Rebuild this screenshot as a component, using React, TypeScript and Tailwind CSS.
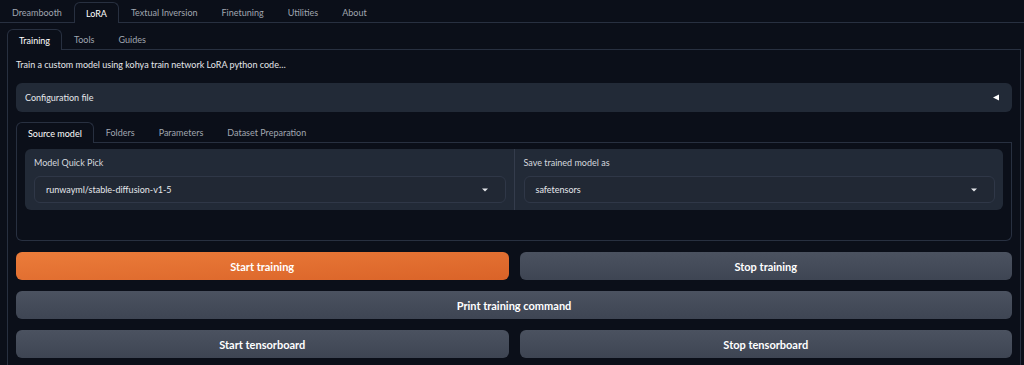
import { useState } from "react"

const topTabs = ["Dreambooth", "LoRA", "Textual Inversion", "Finetuning", "Utilities", "About"]
const subTabs = ["Training", "Tools", "Guides"]
const innerTabs = ["Source model", "Folders", "Parameters", "Dataset Preparation"]

function TabRow({
  tabs,
  active,
  onPick,
}: {
  tabs: string[]
  active: string
  onPick: (t: string) => void
}) {
  return (
    <div className="flex border-b border-[#283040]">
      {tabs.map((t) =>
        t === active ? (
          <button
            key={t}
            className="-mb-px px-[11px] h-[21px] rounded-t-md border border-b-0 border-[#283040] bg-[#0b0f19] text-white"
          >
            {t}
          </button>
        ) : (
          <button
            key={t}
            onClick={() => onPick(t)}
            className="px-[11px] h-[20px] border border-transparent text-[#a0a6b0]"
          >
            {t}
          </button>
        )
      )}
    </div>
  )
}

function Dropdown({ label, value }: { label: string; value: string }) {
  return (
    <div className="flex-1 pl-[9px] pr-[8px] pt-[8px] pb-[7px]">
      <div className="mb-[7px] leading-[12px] text-[#d5d8de]">{label}</div>
      <div className="flex items-center justify-between h-[27px] px-[11px] rounded-md border border-[#2f3747] bg-[#212834] text-[#e5e7eb]">
        <span>{value}</span>
        <svg width="6" height="4" viewBox="0 0 6 4" className="mr-[6px]">
          <path d="M0 0.5h6L3 3.5z" fill="#e5e7eb" />
        </svg>
      </div>
    </div>
  )
}

export default function App() {
  const [top, setTop] = useState("LoRA")
  const [sub, setSub] = useState("Training")
  const [inner, setInner] = useState("Source model")

  return (
    <div
      className="w-[1024px] h-[365px] overflow-hidden bg-[#0b0f19] text-[9px] leading-none"
      style={{ fontFamily: "Lato, 'Noto Sans', sans-serif" }}
    >
      <div className="pt-[2px]">
        <TabRow tabs={topTabs} active={top} onPick={setTop} />
      </div>

      <div className="mx-[7px] mt-[6px] w-[1014px]">
        <TabRow tabs={subTabs} active={sub} onPick={setSub} />

        <div className="border-x border-[#283040] px-[8px] pt-[9px] pb-[20px]">
          <p className="leading-[12px] text-[#e5e7eb]">
            Train a custom model using kohya train network LoRA python code…
          </p>

          <div className="mt-[12px] flex items-center justify-between h-[29px] px-[9px] rounded-md bg-[#222a37] text-[#e5e7eb]">
            <span>Configuration file</span>
            <svg width="6" height="7" viewBox="0 0 6 7" className="mr-[4px]">
              <path d="M6 0.5v6L0 3.5z" fill="#ffffff" />
            </svg>
          </div>

          <div className="mt-[10px]">
            <TabRow tabs={innerTabs} active={inner} onPick={setInner} />
            <div className="h-[98px] px-[8px] pt-[6px] rounded-b-md border border-t-0 border-[#283040]">
              <div className="flex rounded-md bg-[#222a37]">
                <Dropdown label="Model Quick Pick" value="runwayml/stable-diffusion-v1-5" />
                <div className="w-px bg-[#343c4c]" />
                <Dropdown label="Save trained model as" value="safetensors" />
              </div>
            </div>
          </div>

          <div className="mt-[11px] flex flex-col gap-[11px] text-[11px] font-bold text-white">
            <div className="flex gap-[11px]">
              <button className="flex-1 h-[28px] rounded-md bg-gradient-to-br from-[#eb7c3a] to-[#da6328]">
                Start training
              </button>
              <button className="flex-1 h-[28px] rounded-md bg-gradient-to-b from-[#4b5260] to-[#3e4553]">
                Stop training
              </button>
            </div>
            <button className="h-[28px] rounded-md bg-gradient-to-b from-[#4b5260] to-[#3e4553]">
              Print training command
            </button>
            <div className="flex gap-[11px]">
              <button className="flex-1 h-[28px] rounded-md bg-gradient-to-b from-[#4b5260] to-[#3e4553]">
                Start tensorboard
              </button>
              <button className="flex-1 h-[28px] rounded-md bg-gradient-to-b from-[#4b5260] to-[#3e4553]">
                Stop tensorboard
              </button>
            </div>
          </div>
        </div>
      </div>
    </div>
  )
}
